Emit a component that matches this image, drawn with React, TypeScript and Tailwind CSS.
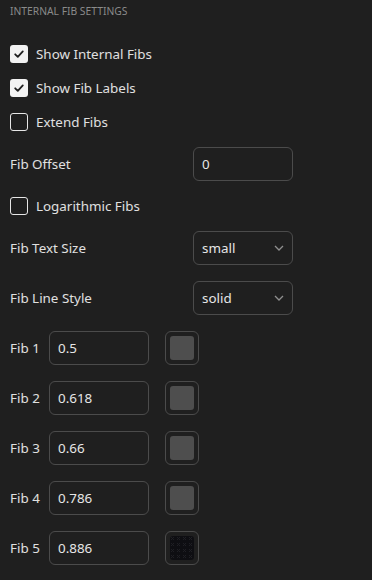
import React from "react";

const font = { fontFamily: '"Noto Sans", "Open Sans", sans-serif' };

function Check({ checked, label }: { checked: boolean; label: string }) {
  return (
    <div className="flex items-center h-[18px] gap-2">
      {checked ? (
        <div className="w-[18px] h-[18px] rounded-[3px] bg-[#f2f2f2] flex items-center justify-center">
          <svg width="12" height="12" viewBox="0 0 12 12" fill="none">
            <path d="M2.2 6.3 L4.8 8.8 L9.8 3.4" stroke="#1f1f1f" strokeWidth="1.8" strokeLinecap="round" strokeLinejoin="round" />
          </svg>
        </div>
      ) : (
        <div className="w-[18px] h-[18px] rounded-[3px] border border-[#e6e6e6]" />
      )}
      <span className="text-[13.4px] text-[#e0e0e0]">{label}</span>
    </div>
  );
}

function Input({ value }: { value: string }) {
  return (
    <div className="w-[100px] h-[34px] rounded-[6px] border border-[#4b4b4b] flex items-center pl-[8px] text-[13.4px] text-[#e6e6e6]">
      {value}
    </div>
  );
}

function Select({ value }: { value: string }) {
  return (
    <div className="w-[100px] h-[34px] rounded-[6px] border border-[#4b4b4b] flex items-center justify-between pl-[8px] pr-[8px] text-[13.4px] text-[#e6e6e6]">
      <span>{value}</span>
      <svg width="10" height="6" viewBox="0 0 10 6" fill="none">
        <path d="M1 1 L5 5 L9 1" stroke="#8f8f8f" strokeWidth="1.3" />
      </svg>
    </div>
  );
}

function LabeledRow({ label, children }: { label: string; children: React.ReactNode }) {
  return (
    <div className="flex items-center h-[34px]">
      <span className="w-[183px] text-[13.4px] text-[#e0e0e0]">{label}</span>
      {children}
    </div>
  );
}

function FibRow({ n, value, dark }: { n: number; value: string; dark?: boolean }) {
  return (
    <div className="flex items-center h-[34px]">
      <span className="w-[39px] text-[13.4px] text-[#e0e0e0]">Fib {n}</span>
      <Input value={value} />
      <div className="ml-[16px] w-[34px] h-[34px] rounded-[6px] border border-[#4b4b4b] flex items-center justify-center">
        {dark ? (
          <svg width="24" height="24" viewBox="0 0 24 24">
            <defs>
              <pattern id="p" width="6" height="6" patternUnits="userSpaceOnUse">
                <rect width="6" height="6" fill="#0e0e12" />
                <rect x="1" y="1" width="1" height="1" fill="#1f1f24" />
                <rect x="3" y="1" width="1" height="1" fill="#1f1f24" />
                <rect x="2" y="2" width="1" height="1" fill="#1f1f24" />
                <rect x="1" y="3" width="1" height="1" fill="#1f1f24" />
                <rect x="3" y="3" width="1" height="1" fill="#1f1f24" />
              </pattern>
            </defs>
            <rect width="24" height="24" rx="3" fill="url(#p)" />
          </svg>
        ) : (
          <div className="w-[24px] h-[24px] rounded-[3px] bg-[#4e4e4e]" />
        )}
      </div>
    </div>
  );
}

export default function App() {
  return (
    <div className="w-[372px] h-[580px] bg-[#1f1f1f] px-[10px] pt-[5px]" style={font}>
      <div className="h-[22px] text-[10.3px] leading-[13px] text-[#8a8a8a]">INTERNAL FIB SETTINGS</div>
      <div className="flex flex-col gap-4 mt-[18px]">
        <Check checked label="Show Internal Fibs" />
        <Check checked label="Show Fib Labels" />
        <Check checked={false} label="Extend Fibs" />
        <LabeledRow label="Fib Offset">
          <Input value="0" />
        </LabeledRow>
        <Check checked={false} label="Logarithmic Fibs" />
        <LabeledRow label="Fib Text Size">
          <Select value="small" />
        </LabeledRow>
        <LabeledRow label="Fib Line Style">
          <Select value="solid" />
        </LabeledRow>
        <FibRow n={1} value="0.5" />
        <FibRow n={2} value="0.618" />
        <FibRow n={3} value="0.66" />
        <FibRow n={4} value="0.786" />
        <FibRow n={5} value="0.886" dark />
      </div>
    </div>
  );
}
